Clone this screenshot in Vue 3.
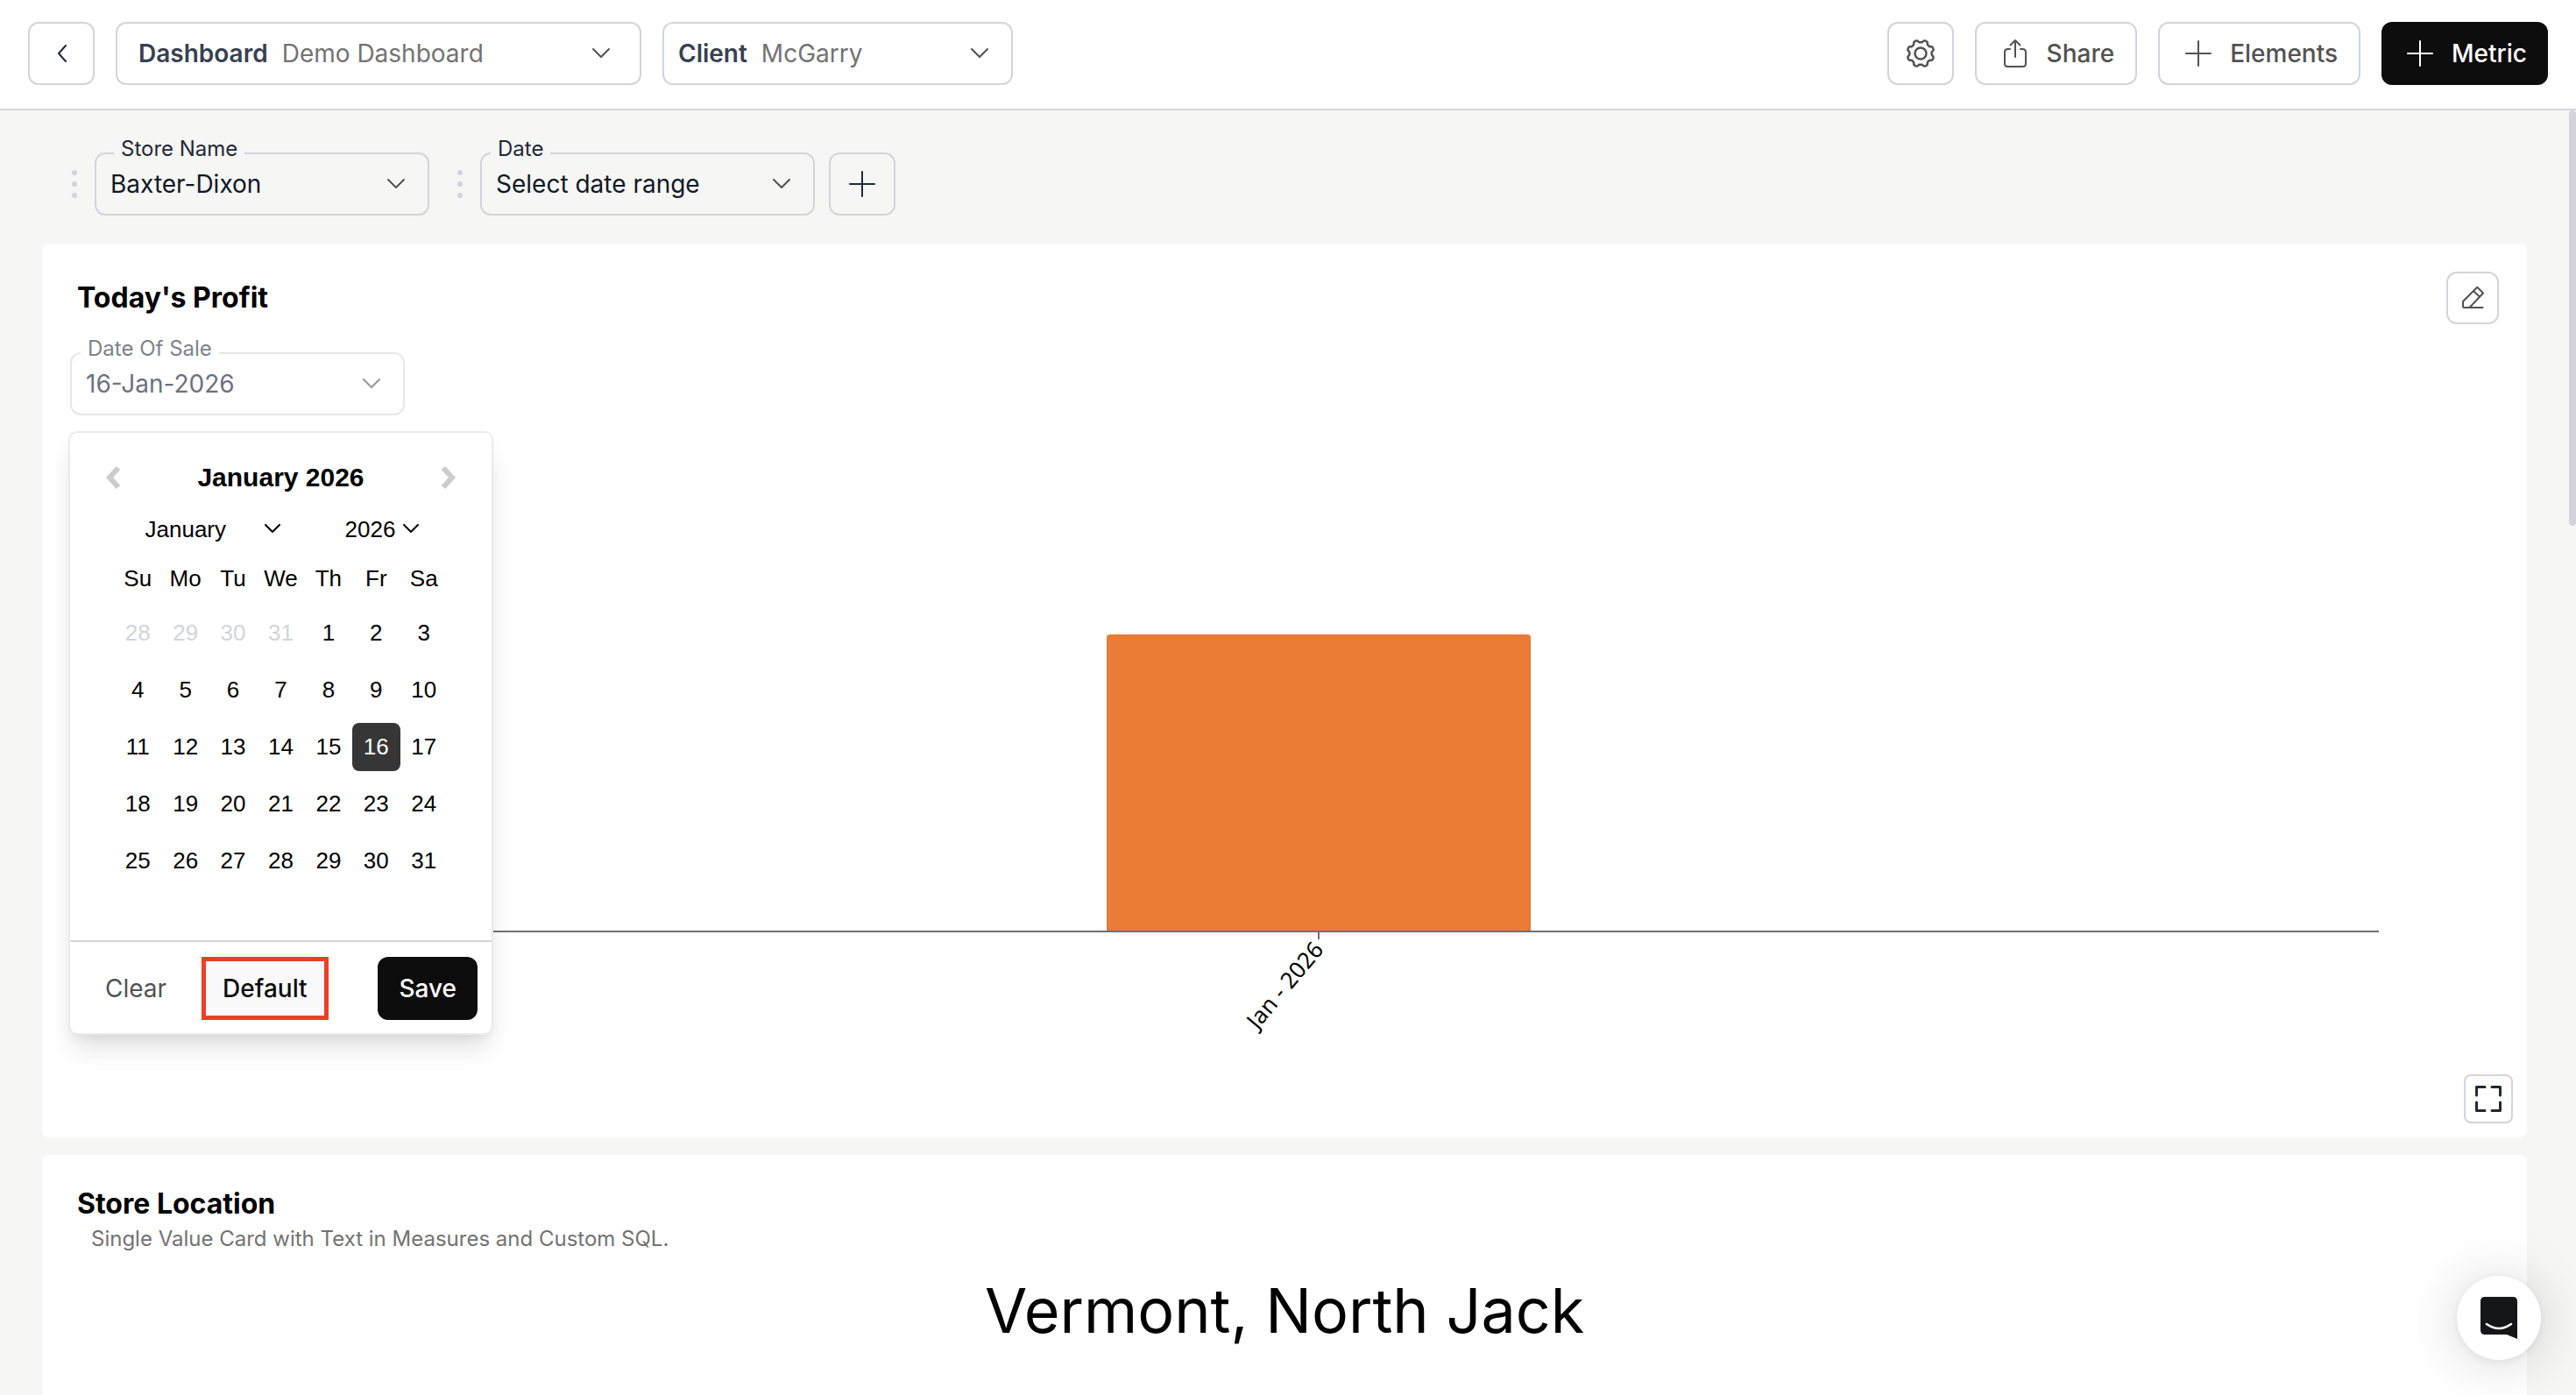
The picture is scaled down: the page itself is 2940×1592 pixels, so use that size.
<script setup>
import { ref } from 'vue'

const dashboard = ref('Demo Dashboard')
const client = ref('McGarry')
const store = ref('Baxter-Dixon')
const month = ref('January')
const year = ref(2026)
const selected = ref(16)

const months = [
  'January', 'February', 'March', 'April', 'May', 'June', 'July',
  'August', 'September', 'October', 'November', 'December'
]
const years = [2024, 2025, 2026, 2027]
const weekdays = ['Su', 'Mo', 'Tu', 'We', 'Th', 'Fr', 'Sa']

// January 2026 starts on a Thursday, so four days of December come first
const weeks = []
for (let w = 0; w < 5; w++) {
  const week = []
  for (let d = 0; d < 7; d++) {
    const n = w * 7 + d - 3
    week.push({ day: n > 0 ? n : n + 31, outside: n <= 0 })
  }
  weeks.push(week)
}

function pick(item) {
  if (!item.outside) selected.value = item.day
}

const bars = ref([{ label: 'Jan - 2026', value: 338 }])

// outline of the gear with eight teeth
function gearPath() {
  const points = []
  for (let a = 0; a < 360; a += 3) {
    const t = (a * Math.PI) / 180
    const r = 14 - 1.4 * Math.tanh(2 * Math.cos(8 * t))
    points.push((17 + r * Math.cos(t)).toFixed(2) + ' ' + (17 + r * Math.sin(t)).toFixed(2))
  }
  return 'M' + points.join('L') + 'Z'
}
const gear = gearPath()
</script>

<template>
  <div class="page">
    <header class="topbar">
      <button class="btn square" aria-label="Back">
        <svg width="12" height="22" viewBox="0 0 12 22"><path d="M11 2L3 11l8 9" /></svg>
      </button>
      <div class="picker dashboard">
        <label for="dashboard">Dashboard</label>
        <select id="dashboard" v-model="dashboard">
          <option>Demo Dashboard</option>
        </select>
        <svg class="chevron" width="22" height="14" viewBox="0 0 22 14"><path d="M2 2l9 9 9-9" /></svg>
      </div>
      <div class="picker client">
        <label for="client">Client</label>
        <select id="client" v-model="client">
          <option>McGarry</option>
        </select>
        <svg class="chevron" width="22" height="14" viewBox="0 0 22 14"><path d="M2 2l9 9 9-9" /></svg>
      </div>
      <div class="actions">
        <button class="btn square" aria-label="Settings">
          <svg class="gear" width="34" height="34" viewBox="0 0 34 34"><path :d="gear" /><circle cx="17" cy="17" r="6.5" /></svg>
        </button>
        <button class="btn">
          <svg width="32" height="34" viewBox="0 0 32 34">
            <path d="M16 21V2M10.500 7.500L16 2l5.500 5.500M10 12H7.500Q4 12 4 15.500V28.500Q4 32 7.500 32H24.500Q28 32 28 28.500V15.500Q28 12 24.500 12H22" />
          </svg>
          Share
        </button>
        <button class="btn">
          <svg width="32" height="32" viewBox="0 0 32 32"><path d="M16 2v28M2 16h28" /></svg>
          Elements
        </button>
        <button class="btn dark">
          <svg width="32" height="32" viewBox="0 0 32 32"><path d="M16 2v28M2 16h28" /></svg>
          Metric
        </button>
      </div>
    </header>

    <main class="content">
      <div class="filters">
        <div class="filter">
          <span class="grip"><i></i><i></i><i></i></span>
          <div class="field wide">
            <label for="store">Store Name</label>
            <select id="store" v-model="store">
              <option>Baxter-Dixon</option>
            </select>
            <svg class="chevron" width="22" height="14" viewBox="0 0 22 14"><path d="M2 2l9 9 9-9" /></svg>
          </div>
        </div>
        <div class="filter">
          <span class="grip"><i></i><i></i><i></i></span>
          <div class="field">
            <label for="range">Date</label>
            <button id="range">Select date range</button>
            <svg class="chevron" width="22" height="14" viewBox="0 0 22 14"><path d="M2 2l9 9 9-9" /></svg>
          </div>
        </div>
        <button class="btn square add" aria-label="Add filter">
          <svg width="32" height="32" viewBox="0 0 32 32"><path d="M16 2v28M2 16h28" /></svg>
        </button>
      </div>

      <section class="card">
        <div class="card-head">
          <h2>Today's Profit</h2>
          <button class="btn edit" aria-label="Edit">
            <svg width="28" height="28" viewBox="0 0 28 28">
              <path d="M25.500 25H4.500Q3 25 3 23.500V18L19.300 1.800L26 8.500L11 24.500M15 6l7 6.700" />
            </svg>
          </button>
        </div>

        <div class="field open">
          <label for="sale">Date Of Sale</label>
          <button id="sale">16-Jan-2026</button>
          <svg class="chevron" width="22" height="14" viewBox="0 0 22 14"><path d="M2 2l9 9 9-9" /></svg>

          <div class="calendar">
            <div class="cal-head">
              <button aria-label="Previous month">
                <svg width="18" height="28" viewBox="0 0 18 28"><path d="M15 3L5 14l10 11" /></svg>
              </button>
              <strong>{{ month }} {{ year }}</strong>
              <button aria-label="Next month">
                <svg width="18" height="28" viewBox="0 0 18 28"><path d="M3 3l10 11L3 25" /></svg>
              </button>
            </div>
            <div class="cal-selects">
              <div class="cal-select month">
                <select v-model="month" aria-label="Month">
                  <option v-for="m in months" :key="m">{{ m }}</option>
                </select>
                <svg width="18" height="12" viewBox="0 0 18 12"><path d="M1 1l8 8 8-8" /></svg>
              </div>
              <div class="cal-select year">
                <select v-model="year" aria-label="Year">
                  <option v-for="y in years" :key="y" :value="y">{{ y }}</option>
                </select>
                <svg width="18" height="12" viewBox="0 0 18 12"><path d="M1 1l8 8 8-8" /></svg>
              </div>
            </div>
            <table>
              <thead>
                <tr>
                  <th v-for="d in weekdays" :key="d">{{ d }}</th>
                </tr>
              </thead>
              <tbody>
                <tr v-for="(week, index) in weeks" :key="index">
                  <td v-for="item in week" :key="item.day">
                    <button
                      :class="{ outside: item.outside, selected: !item.outside && item.day === selected }"
                      @click="pick(item)"
                    >{{ item.day }}</button>
                  </td>
                </tr>
              </tbody>
            </table>
            <div class="cal-foot">
              <button class="clear">Clear</button>
              <button class="default">Default</button>
              <button class="save">Save</button>
            </div>
          </div>
        </div>

        <div class="chart">
          <div v-for="bar in bars" :key="bar.label" class="bar" :style="{ height: bar.value + 'px' }"></div>
        </div>
        <div class="axis">
          <div v-for="bar in bars" :key="bar.label" class="tick"><span>{{ bar.label }}</span></div>
        </div>
        <div class="card-foot">
          <button class="btn full" aria-label="Full screen">
            <svg width="32" height="32" viewBox="0 0 32 32">
              <path d="M2.500 12V2.500H12M20 2.500h9.500V12M29.500 20v9.500H20M12 29.500H2.500V20" />
            </svg>
          </button>
        </div>
      </section>

      <section class="card location">
        <h2>Store Location</h2>
        <p class="desc">Single Value Card with Text in Measures and Custom SQL.</p>
        <p class="value">Vermont, North Jack</p>
      </section>

      <div class="scroll-thumb"></div>
    </main>

    <button class="chat" aria-label="Open chat">
      <svg width="42" height="48" viewBox="0 0 42 48">
        <path d="M5 0H37Q42 0 42 5V48L30 43H5Q0 43 0 38V5Q0 0 5 0Z" fill="#15161a" />
        <path d="M7 31Q21 41 35 31" fill="none" stroke="#fff" stroke-width="2.600" stroke-linecap="round" />
      </svg>
    </button>
  </div>
</template>

<style>
body {
  margin: 0;
  overflow: hidden;
}
</style>

<style scoped>
* {
  box-sizing: border-box;
}

.page {
  display: flex;
  flex-direction: column;
  height: 100vh;
  background: #f6f6f4;
  font-family: Inter, "Liberation Sans", sans-serif;
  font-size: 28px;
  color: #111827;
}

button,
select {
  font: inherit;
  color: inherit;
  border: none;
  background: none;
  padding: 0;
  cursor: pointer;
}

select {
  appearance: none;
  outline: none;
}

svg {
  flex: none;
}

.btn svg,
.chevron,
.calendar svg {
  fill: none;
  stroke: currentColor;
  stroke-width: 2;
  stroke-linecap: round;
  stroke-linejoin: round;
}

.btn .gear {
  stroke-width: 2.5;
}

.topbar {
  display: flex;
  flex: none;
  align-items: flex-start;
  gap: 24px;
  height: 126px;
  padding: 25px 32px 0;
  background: #fff;
  border-bottom: 2px solid #d1d5db;
}

.btn {
  display: flex;
  align-items: center;
  justify-content: center;
  gap: 20px;
  height: 72px;
  padding: 0 24px 0 28px;
  border: 2px solid #d1d5db;
  border-radius: 12px;
  font-weight: 500;
  color: #525252;
}

.square {
  width: 76px;
  padding: 0;
  color: #1f2937;
}

.actions {
  display: flex;
  gap: 24px;
  margin-left: auto;
}

.actions .square {
  color: #525252;
}

.dark {
  color: #fff;
  background: #0d0d0d;
  border: none;
}

.picker {
  display: flex;
  align-items: center;
  gap: 16px;
  height: 72px;
  border: 2px solid #d1d5db;
  border-radius: 12px;
}

.picker label {
  font-weight: 600;
  color: #374151;
}

.picker select {
  flex: 1;
  color: #737373;
}

.dashboard {
  width: 600px;
  padding: 0 33px 0 24px;
}

.client {
  width: 400px;
  padding: 0 25px 0 16px;
}

.chevron {
  color: #525252;
}

.content {
  position: relative;
  flex: 1;
  overflow: hidden;
  padding: 48px 56px 0 48px;
}

.filters {
  display: flex;
  gap: 16px;
  padding-left: 32px;
  margin-bottom: 32px;
}

.filter {
  display: flex;
  align-items: center;
  gap: 20px;
}

.filter + .filter {
  margin-left: 14px;
}

.grip {
  display: flex;
  flex-direction: column;
  gap: 7px;
  margin-left: 2px;
}

.grip i {
  width: 6px;
  height: 6px;
  border-radius: 50%;
  background: #d1d5db;
}

.field {
  position: relative;
  display: flex;
  align-items: center;
  width: 382px;
  height: 72px;
  padding: 0 25px 0 16px;
  border: 2px solid #d1d5db;
  border-radius: 12px;
}

.field > label {
  position: absolute;
  top: -20px;
  left: 10px;
  padding: 0 8px;
  background: #f6f6f4;
  font-size: 24px;
  line-height: 28px;
  color: #1f2937;
}

.wide > label {
  left: 20px;
}

.field > select,
.field > button {
  flex: 1;
  text-align: left;
}

.card {
  background: #fff;
  border-radius: 8px;
  margin-bottom: 20px;
}

.card-head {
  display: flex;
  align-items: center;
  justify-content: space-between;
  padding: 32px 32px 32px 40px;
}

h2 {
  margin: 0;
  font-size: 32px;
  line-height: 40px;
  font-weight: 700;
  color: #000;
}

.edit {
  width: 60px;
  height: 60px;
  padding: 0;
}

.open {
  margin-left: 32px;
  border-color: #e5e7eb;
  color: #6b7280;
}

.open > label {
  background: #fff;
  color: #7d828c;
}

.open > .chevron {
  color: #979797;
}

.calendar {
  position: absolute;
  z-index: 2;
  top: 88px;
  left: -4px;
  width: 485px;
  padding-top: 20px;
  background: #fff;
  border: 2px solid #ebebeb;
  border-radius: 10px;
  box-shadow: 0 20px 30px -6px rgba(0, 0, 0, 0.12), 0 8px 12px -4px rgba(0, 0, 0, 0.06);
  font-family: "Liberation Sans", sans-serif;
  font-size: 26px;
  color: #000;
}

.cal-head {
  display: flex;
  align-items: center;
  justify-content: space-between;
  height: 62px;
  padding: 0 40px;
  font-size: 30px;
}

.cal-head button {
  display: flex;
  color: #ccc;
}

.cal-head svg {
  stroke-width: 6;
  stroke-linecap: butt;
  stroke-linejoin: miter;
}

.cal-selects {
  display: flex;
  justify-content: center;
  gap: 72px;
  height: 56px;
}

.cal-select {
  display: flex;
  align-items: center;
  padding-left: 2px;
}

.cal-select select {
  flex: 1;
}

.month {
  width: 156px;
}

.year {
  width: 86px;
}

table {
  width: 381px;
  margin: 0 auto 58px;
  border-collapse: collapse;
  table-layout: fixed;
}

th {
  height: 58px;
  padding: 0 0 2px;
  font-weight: 400;
}

td {
  height: 65px;
  padding: 0;
}

td button {
  display: block;
  width: 100%;
  height: 55px;
  border-radius: 8px;
  text-align: center;
}

.outside {
  color: #d1d5db;
}

.selected {
  background: #363636;
  color: #fff;
}

.cal-foot {
  display: flex;
  align-items: center;
  gap: 18px;
  padding: 17px 16px 15px;
  border-top: 2px solid #d1d5db;
  font-family: Inter, sans-serif;
  font-size: 28px;
  font-weight: 500;
}

.cal-foot button {
  height: 72px;
  padding: 0 24px;
  border-radius: 12px;
}

.cal-foot .clear {
  padding-right: 0;
  margin-right: 22px;
  font-weight: 400;
  color: #525252;
}

.cal-foot .default {
  padding: 0 19px;
  background: #f9f9f9;
  border: 5px solid #ec4026;
  border-radius: 0;
  color: #0d0d0d;
}

.cal-foot .save {
  margin-left: auto;
  background: #0d0d0d;
  color: #fff;
}

.chart {
  display: flex;
  justify-content: center;
  align-items: flex-end;
  height: 590px;
  margin: 0 169px 0 247px;
  border-bottom: 2px solid #6e7079;
}

.bar {
  width: 20%;
  background: #e87c36;
  border-radius: 4px 4px 0 0;
}

.axis {
  display: flex;
  justify-content: center;
  height: 162px;
  margin: 0 169px 0 247px;
}

.tick {
  position: relative;
  width: 2px;
  height: 8px;
  background: #6e7079;
}

.tick span {
  position: absolute;
  top: 0;
  right: 2px;
  font-family: "Noto Sans", sans-serif;
  font-size: 26px;
  line-height: 28px;
  white-space: nowrap;
  color: #000;
  transform: rotate(-50deg);
  transform-origin: right center;
}

.card-foot {
  display: flex;
  justify-content: flex-end;
  padding: 0 16px 16px;
}

.full {
  width: 56px;
  height: 56px;
  padding: 0;
  border-radius: 8px;
  color: #1f2937;
}

.full svg {
  stroke-width: 3;
}

.location {
  min-height: 420px;
  padding: 36px 40px;
}

.desc {
  margin: 4px 0 0 16px;
  font-size: 24px;
  line-height: 32px;
  color: #737373;
}

.value {
  margin: 24px 0 0;
  text-align: center;
  font-size: 70px;
  line-height: 84px;
  color: #000;
}

.scroll-thumb {
  position: absolute;
  top: 0;
  right: 0;
  width: 8px;
  height: 474px;
  border-radius: 4px;
  background: #d1d5db;
}

.chat {
  position: fixed;
  right: 40px;
  bottom: 40px;
  display: flex;
  align-items: center;
  justify-content: center;
  width: 96px;
  height: 96px;
  background: #fff;
  border-radius: 50%;
  box-shadow: 0 2px 12px rgba(0, 0, 0, 0.08), 0 4px 64px rgba(0, 0, 0, 0.16);
}
</style>
